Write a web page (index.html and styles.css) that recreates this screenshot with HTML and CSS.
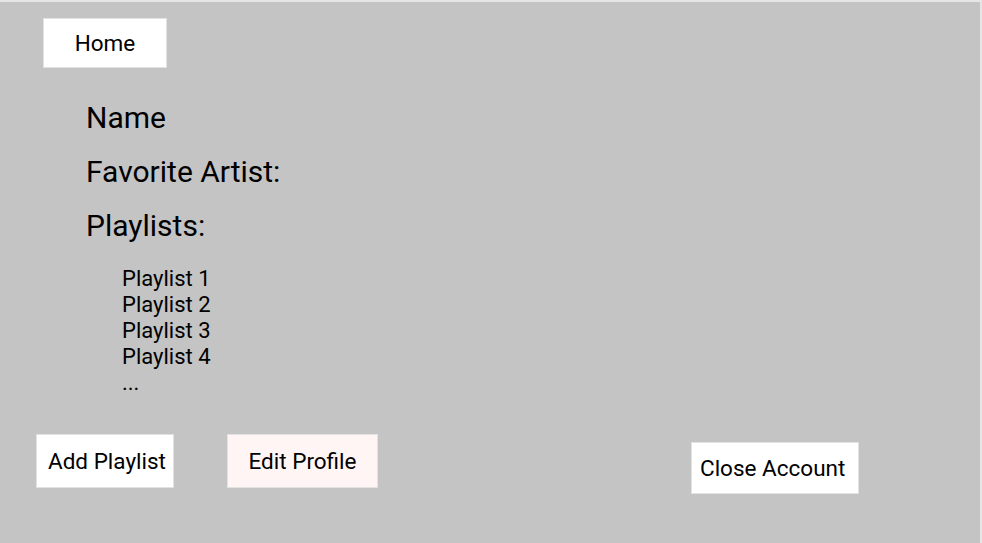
FILE: index.html
```html
<!DOCTYPE html>
<html>
<head>
<meta charset="utf-8">
<link rel="stylesheet" href="styles.css">
</head>
<body>
<div class="frame">
  <div class="home-btn">Home</div>
  <div class="info">
    <div class="heading">Name</div>
    <div class="heading">Favorite Artist:</div>
    <div class="heading">Playlists:</div>
    <div class="playlists">
      <div>Playlist 1</div>
      <div>Playlist 2</div>
      <div>Playlist 3</div>
      <div>Playlist 4</div>
      <div>...</div>
    </div>
  </div>
  <div class="actions">
    <div class="btn add">Add Playlist</div>
    <div class="btn edit">Edit Profile</div>
    <div class="btn close">Close Account</div>
  </div>
</div>
</body>
</html>
```

FILE: styles.css
```css
html, body {
  margin: 0;
  padding: 0;
}
body {
  background: #e6e6e6;
  font-family: Roboto, "Liberation Sans", sans-serif;
  color: #000;
  width: 982px;
  height: 543px;
  overflow: hidden;
}
.frame {
  margin-top: 2px;
  width: 980px;
  height: 541px;
  background: #c4c4c4;
  box-sizing: border-box;
  padding-top: 16px;
}
.home-btn {
  margin-left: 43px;
  width: 124px;
  height: 50px;
  box-sizing: border-box;
  border: 1px solid #e2e2e2;
  background: #fff;
  font-size: 22.5px;
  display: flex;
  align-items: center;
  justify-content: center;
}
.info {
  margin-left: 86px;
  margin-top: 23px;
}
.heading {
  font-size: 30px;
  line-height: 54px;
}
.heading + .heading {
  margin-top: 0;
}
.playlists {
  margin-top: 13px;
  margin-left: 36px;
  font-size: 22px;
  line-height: 26px;
}
.actions {
  display: flex;
  align-items: flex-start;
  margin-top: 38px;
}
.btn {
  box-sizing: border-box;
  border: 1px solid #e2e2e2;
  background: #fff;
  font-size: 22.5px;
  display: flex;
  align-items: center;
  justify-content: center;
  height: 54px;
}
.add {
  margin-left: 36px;
  width: 138px;
  justify-content: flex-start;
  padding-left: 11px;
}
.edit {
  margin-left: 53px;
  width: 151px;
  background: #fff5f5;
}
.close {
  margin-left: 313px;
  margin-top: 8px;
  width: 168px;
  height: 52px;
  justify-content: flex-start;
  padding-left: 8px;
}
```
